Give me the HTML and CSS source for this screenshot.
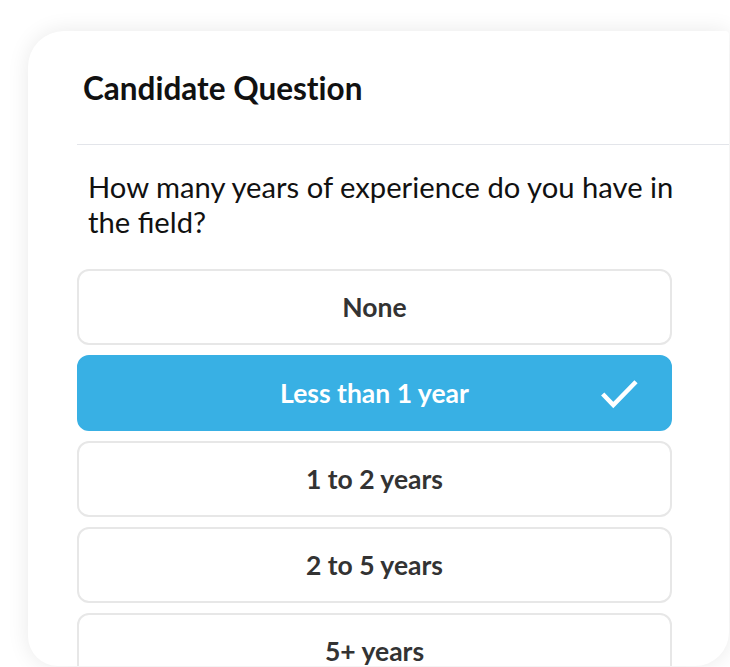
FILE: index.html
```html
<!DOCTYPE html>
<html>
<head>
<meta charset="utf-8">
<link rel="stylesheet" href="styles.css">
</head>
<body>
<div class="card">
  <div class="header">
    <h1 class="title">Candidate Question</h1>
  </div>
  <p class="question">How many years of experience do you have in the field?</p>
  <div class="options">
    <div class="option">None</div>
    <div class="option selected">Less than 1 year
      <svg class="check" width="40" height="32" viewBox="0 0 40 32"><polyline points="2.7,17 13.3,28 36,4.7" fill="none" stroke="#fff" stroke-width="4.5"/></svg>
    </div>
    <div class="option">1 to 2 years</div>
    <div class="option">2 to 5 years</div>
    <div class="option">5+ years</div>
  </div>
</div>
</body>
</html>
```
FILE: styles.css
```css
html, body {
  margin: 0;
  padding: 0;
  background: #ffffff;
  overflow: hidden;
  height: 667px;
}
body {
  font-family: Lato, "Open Sans", sans-serif;
  padding-top: 31px;
  padding-left: 28px;
  box-sizing: border-box;
}
.card {
  width: 701px;
  height: 635px;
  background: #fff;
  border-radius: 36px 4px 34px 30px;
  box-shadow: 0 0 22px rgba(0, 0, 0, 0.09);
  overflow: hidden;
  box-sizing: border-box;
  padding-top: 39px;
}
.header {
  margin-left: 49px;
  border-bottom: 1px solid #e3e5ea;
  padding-left: 6px;
  padding-bottom: 36px;
}
.title {
  margin: 0;
  font-size: 31.5px;
  font-weight: 700;
  line-height: 1.2;
  font-variant-ligatures: no-common-ligatures;
  color: #111;
}
.question {
  margin: 24px 0 0 60px;
  width: 615px;
  font-size: 29.2px;
  line-height: 35px;
  color: #111;
}
.options {
  margin: 30px 0 0 49px;
  width: 595px;
  display: flex;
  flex-direction: column;
  gap: 10px;
}
.option {
  position: relative;
  height: 76px;
  box-sizing: border-box;
  border: 2px solid #e7e7e7;
  border-radius: 12px;
  display: flex;
  align-items: center;
  justify-content: center;
  font-size: 26.5px;
  font-weight: 700;
  color: #333;
  flex-shrink: 0;
}
.option.selected {
  background: #38b0e4;
  border-color: #38b0e4;
  color: #fff;
}
.check {
  position: absolute;
  right: 30px;
  top: 50%;
  margin-top: -16px;
}
```
